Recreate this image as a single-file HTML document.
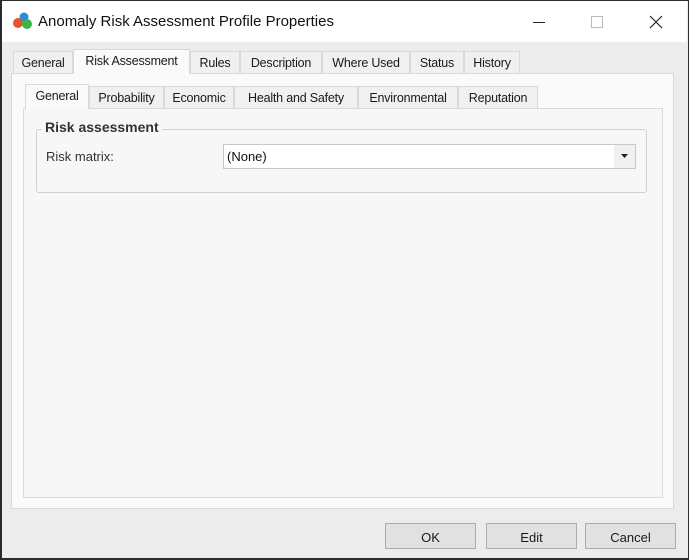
<!DOCTYPE html>
<html><head><style>
*{margin:0;padding:0;box-sizing:border-box}
body{width:689px;height:560px;background:#f0f0f0;font-family:"Liberation Sans",sans-serif;font-size:13px;color:#1a1a1a;position:relative;overflow:hidden}
.a{position:absolute}
.win{left:0;top:0;width:689px;height:560px;border:1px solid #2b2b2b;border-left-width:2px;border-bottom-width:2px;background:#ececec}
.title{left:2px;top:1px;width:685px;height:41px;background:#fff}
.tab{position:absolute;height:22px;border:1px solid #d9d9d9;border-bottom:none;background:#f0f0f0;text-align:center;line-height:23px;font-size:12.5px;letter-spacing:-0.2px}
.sel{background:#fafafa;height:25px;line-height:23px;z-index:2}
.btn{position:absolute;top:523px;width:91px;height:26px;border:1px solid #adadad;background:#e1e1e1;text-align:center;line-height:27px;font-size:13px}
</style></head><body>
<div class="a win"></div>
<div class="a title"></div>
<svg class="a" style="left:12px;top:11px" width="22" height="20">
<circle cx="12" cy="6" r="4.5" fill="#2a8fd8"/><circle cx="6" cy="12" r="5" fill="#e8552a"/><circle cx="15" cy="13" r="5" fill="#3cb44a"/></svg>
<div class="a" style="left:38px;top:13px;font-size:15px;color:#111">Anomaly Risk Assessment Profile Properties</div>
<div class="a" style="left:533px;top:22px;width:12px;height:1px;background:#222"></div>
<div class="a" style="left:591px;top:16px;width:12px;height:12px;border:1px solid #bbb"></div>
<svg class="a" style="left:649px;top:15px" width="14" height="14"><path d="M1 1L13 13M13 1L1 13" stroke="#222" stroke-width="1.2"/></svg>

<div class="a" style="left:11px;top:73px;width:663px;height:436px;background:#fafafa;border:1px solid #dadada"></div>
<div class="tab" style="left:13px;top:51px;width:60px">General</div>
<div class="tab sel" style="left:73px;top:49px;width:117px">Risk Assessment</div>
<div class="tab" style="left:190px;top:51px;width:50px">Rules</div>
<div class="tab" style="left:240px;top:51px;width:82px">Description</div>
<div class="tab" style="left:322px;top:51px;width:88px">Where Used</div>
<div class="tab" style="left:410px;top:51px;width:54px">Status</div>
<div class="tab" style="left:464px;top:51px;width:56px">History</div>

<div class="a" style="left:23px;top:108px;width:640px;height:390px;background:#f7f7f7;border:1px solid #dadada"></div>
<div class="tab sel" style="left:25px;top:84px;width:64px;background:#fafafa">General</div>
<div class="tab" style="left:89px;top:86px;width:75px">Probability</div>
<div class="tab" style="left:164px;top:86px;width:70px">Economic</div>
<div class="tab" style="left:234px;top:86px;width:124px">Health and Safety</div>
<div class="tab" style="left:358px;top:86px;width:100px">Environmental</div>
<div class="tab" style="left:458px;top:86px;width:80px">Reputation</div>

<div class="a" style="left:36px;top:129px;width:611px;height:64px;border:1px solid #d0d0d0;border-radius:3px"></div>
<div class="a" style="left:42px;top:119px;padding:0 3px;background:#f7f7f7;font-weight:bold;font-size:14px;color:#333">Risk assessment</div>
<div class="a" style="left:46px;top:149px;color:#333">Risk matrix:</div>
<div class="a" style="left:223px;top:144px;width:413px;height:25px;background:#fff;border:1px solid #c8c8c8"></div>
<div class="a" style="left:227px;top:149px;color:#111">(None)</div>
<div class="a" style="left:614px;top:145px;width:21px;height:23px;background:#f0f0f0"></div>
<svg class="a" style="left:621px;top:154px" width="8" height="5"><path d="M0 0H7L3.5 4Z" fill="#222"/></svg>

<div class="btn" style="left:385px">OK</div>
<div class="btn" style="left:486px">Edit</div>
<div class="btn" style="left:585px">Cancel</div>
</body></html>
